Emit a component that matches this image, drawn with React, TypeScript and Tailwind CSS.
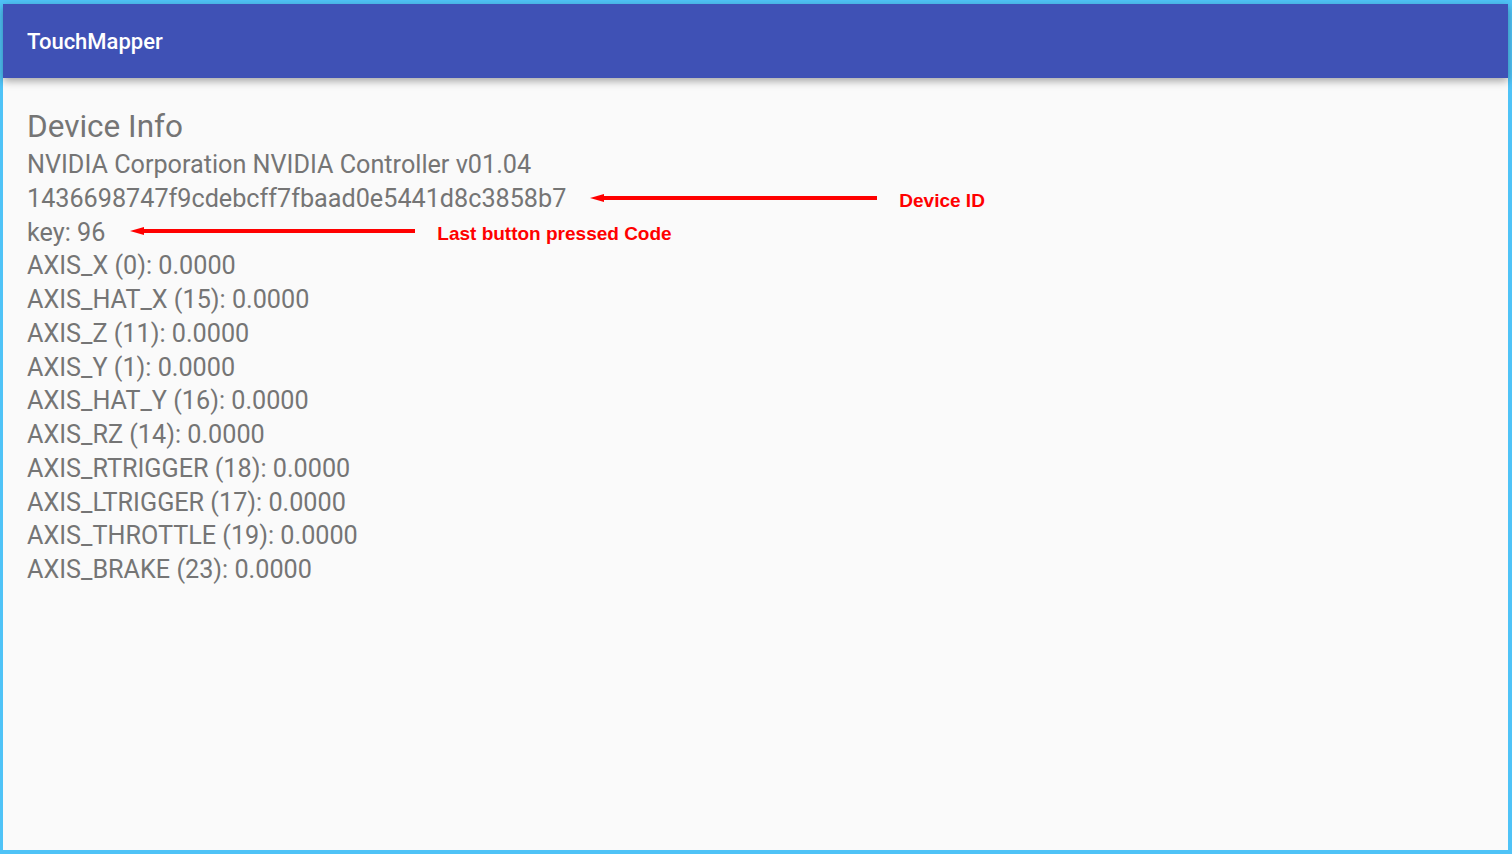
import React from "react";

const axes = [
  "AXIS_X (0): 0.0000",
  "AXIS_HAT_X (15): 0.0000",
  "AXIS_Z (11): 0.0000",
  "AXIS_Y (1): 0.0000",
  "AXIS_HAT_Y (16): 0.0000",
  "AXIS_RZ (14): 0.0000",
  "AXIS_RTRIGGER (18): 0.0000",
  "AXIS_LTRIGGER (17): 0.0000",
  "AXIS_THROTTLE (19): 0.0000",
  "AXIS_BRAKE (23): 0.0000",
];

function Arrow({ width }: { width: number }) {
  return (
    <svg width={width} height="10" viewBox={`0 0 ${width} 10`} className="block">
      <rect x="8" y="3" width={width - 8} height="4" fill="#ff0000" />
      <polygon points="0,5 14,1 14,9" fill="#ff0000" />
    </svg>
  );
}

export default function App() {
  return (
    <div className="w-[1512px] h-[854px] bg-[#4fc3f7] pt-[4px] pl-[3px] pr-[4px] pb-[4px] overflow-hidden">
      <div className="w-full h-full bg-[#fafafa] flex flex-col" style={{ fontFamily: "Roboto, 'Liberation Sans', sans-serif" }}>
        <div className="h-[74px] bg-[#3f51b5] flex items-center pl-[24px] shadow-[0_3px_8px_rgba(0,0,0,0.35)] relative z-10 shrink-0">
          <span className="text-white text-[22px] font-medium">TouchMapper</span>
        </div>
        <div className="pl-[24px] pt-[30px] text-[#757575]">
          <div className="text-[31.5px] leading-[38px]">Device Info</div>
          <div className="text-[25.2px] leading-[33.75px] mt-[2px]">
            <div>NVIDIA Corporation NVIDIA Controller v01.04</div>
            <div className="flex items-center h-[33.75px]">
              <span>1436698747f9cdebcff7fbaad0e5441d8c3858b7</span>
              <span className="ml-[24px] -mt-[1px]"><Arrow width={287} /></span>
              <span className="ml-[22px] mt-[5px] text-[19px] leading-[22px] font-bold text-[#ff0000]" style={{ fontFamily: "'Liberation Sans', Arial, sans-serif" }}>Device ID</span>
            </div>
            <div className="flex items-center h-[33.75px]">
              <span>key: 96</span>
              <span className="ml-[25px] -mt-[2px]"><Arrow width={285} /></span>
              <span className="ml-[22px] mt-[4px] text-[19px] leading-[22px] font-bold text-[#ff0000]" style={{ fontFamily: "'Liberation Sans', Arial, sans-serif" }}>Last button pressed Code</span>
            </div>
            {axes.map((a) => (
              <div key={a}>{a}</div>
            ))}
          </div>
        </div>
      </div>
    </div>
  );
}
